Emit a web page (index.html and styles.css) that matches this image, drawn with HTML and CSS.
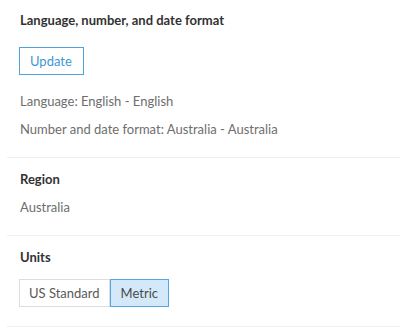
FILE: index.html
```html
<!DOCTYPE html>
<html lang="en">
<head>
    <meta charset="UTF-8">
    <title>Language and region</title>
    <link rel="stylesheet" href="styles.css">
</head>
<body>
    <div class="section">
        <h2>Language, number, and date format</h2>
        <button class="btn-outline">Update</button>
        <p class="value">Language: English - English</p>
        <p class="value">Number and date format: Australia - Australia</p>
    </div>

    <div class="section">
        <h2>Region</h2>
        <p class="value value-tight">Australia</p>
    </div>

    <div class="section">
        <h2>Units</h2>
        <div class="segmented">
            <button class="seg">US Standard</button>
            <button class="seg active">Metric</button>
        </div>
    </div>
</body>
</html>
```

FILE: styles.css
```css
body {
    font-family: Lato, "Open Sans", Arial, sans-serif;
    font-size: 13px;
    background-color: #ffffff;
    color: #6e6e6e;
    margin: 0;
}
.section {
    margin-left: 7px;
    padding: 13px 0 14px 13px;
    border-bottom: 1px solid #efefef;
}
.section:first-child {
    padding-top: 12px;
}
h2 {
    margin: 0;
    font-size: 13px;
    line-height: 16px;
    font-weight: 700;
    color: #323232;
}
.value {
    margin: 0;
    line-height: 28px;
}
.value-tight {
    margin-top: 6px;
}
.btn-outline {
    display: block;
    margin: 19px 0 12px -1px;
    height: 28px;
    padding: 0 11px 0 10px;
    font-family: inherit;
    font-size: 13px;
    color: #3d98d6;
    background: #fff;
    border: 1px solid #4fa3dd;
    cursor: pointer;
}
.section:last-child {
    padding-bottom: 19px;
}
.segmented {
    display: flex;
    margin: 14px 0 0 -1px;
}
.seg {
    height: 28px;
    padding: 0 9px;
    font-family: inherit;
    font-size: 13px;
    color: #595959;
    background: #fff;
    border: 1px solid #dddddd;
    cursor: pointer;
}
.seg.active {
    padding: 0 10px;
    background: #d3e9f9;
    border-color: #56a7df;
    color: #4a4a4a;
}
```
